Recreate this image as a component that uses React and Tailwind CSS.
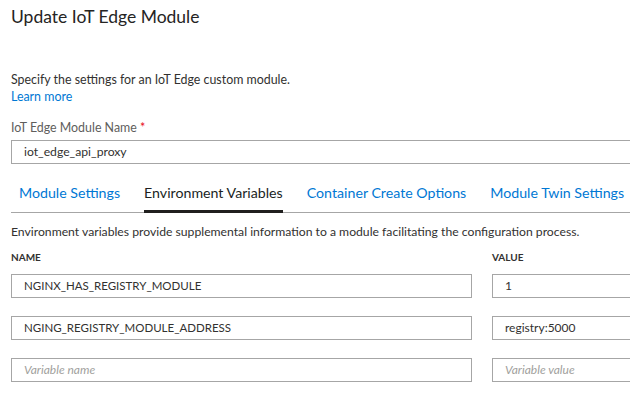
export default function App() {
  const rows = [
    { name: "NGINX_HAS_REGISTRY_MODULE", value: "1" },
    { name: "NGING_REGISTRY_MODULE_ADDRESS", value: "registry:5000" },
    { name: "", value: "" },
  ];
  const tabs = [
    "Module Settings",
    "Environment Variables",
    "Container Create Options",
    "Module Twin Settings",
  ];

  return (
    <div className="h-[401px] w-[630px] overflow-hidden bg-white pl-[11px] text-[#323130] [font-family:Lato,sans-serif]">
      <h1 className="pt-[5px] text-[17.5px] leading-[24px] text-[#252423]">Update IoT Edge Module</h1>

      <p className="mt-[42px] text-[12.4px] leading-[17px]">Specify the settings for an IoT Edge custom module.</p>
      <a className="block text-[12.4px] leading-[17px] text-[#0078d4]">Learn more</a>

      <div className="mt-[14px] text-[12.4px] leading-[17px] text-[#605e5c]">
        IoT Edge Module Name <span className="text-[#e81123]">*</span>
      </div>
      <div className="mt-[4px] flex h-[24px] items-center border border-r-0 border-[#a6a6a6] pl-[12px] text-[12.2px]">
        iot_edge_api_proxy
      </div>

      <div className="mt-[19px] flex border-b border-[#a6a6a6] pl-[8px]">
        {tabs.map((t, i) => (
          <div
            key={t}
            className={`-mb-px mr-[24px] shrink-0 whitespace-nowrap border-b-[3px] pb-[7px] text-[14.2px] leading-[20px] ${
              i === 1 ? "border-[#201f1e] text-[#201f1e]" : "border-transparent text-[#0078d4]"
            }`}
          >
            {t}
          </div>
        ))}
      </div>

      <p className="mt-[11px] whitespace-nowrap text-[12.2px] leading-[16px]">
        Environment variables provide supplemental information to a module facilitating the configuration process.
      </p>

      <div className="mt-[10px] flex text-[10px] font-bold leading-[14px]">
        <div className="w-[481px]">NAME</div>
        <div>VALUE</div>
      </div>

      <div className="mt-[10px] flex flex-col gap-[18px]">
        {rows.map((r, i) => (
          <div key={i} className="flex text-[12px]">
            <div className="flex h-[24px] w-[461px] items-center border border-[#a6a6a6] px-[12px]">
              {r.name ? (
                <span className="text-[11.5px]">{r.name}</span>
              ) : (
                <span className="italic text-[#a19f9d]">Variable name</span>
              )}
            </div>
            <div className="ml-[20px] flex h-[24px] flex-1 items-center border border-r-0 border-[#a6a6a6] px-[12px]">
              {r.value || <span className="italic text-[#a19f9d]">Variable value</span>}
            </div>
          </div>
        ))}
      </div>
    </div>
  );
}
